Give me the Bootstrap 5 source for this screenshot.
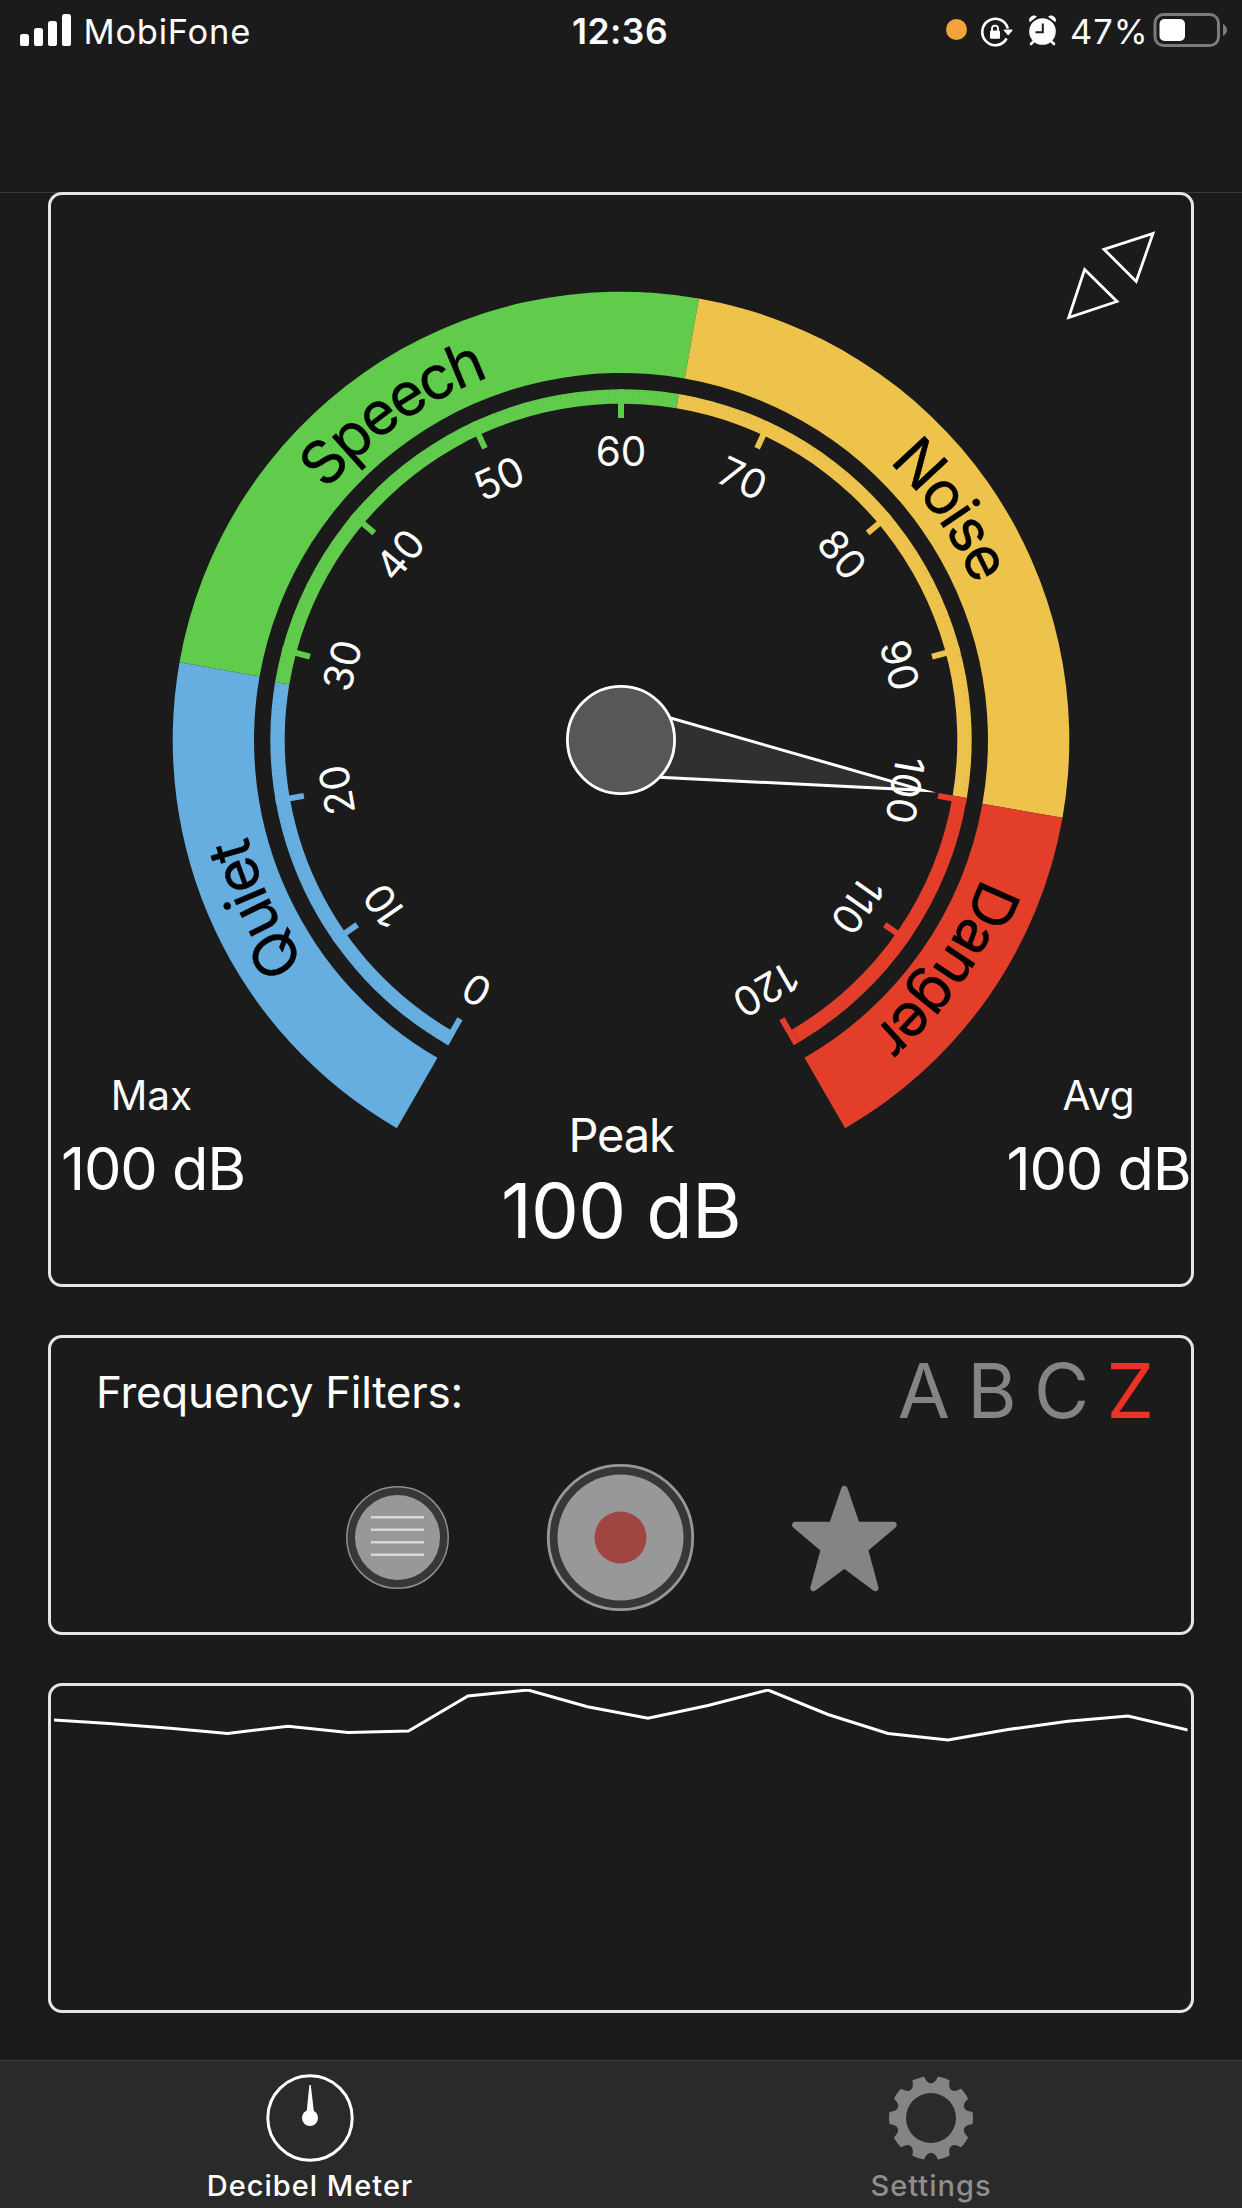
<!DOCTYPE html>
<html lang="en">
<head>
<meta charset="utf-8">
<meta name="viewport" content="width=device-width, initial-scale=1">
<title>Decibel Meter</title>
<link href="https://cdn.jsdelivr.net/npm/bootstrap@5.3.0/dist/css/bootstrap.min.css" rel="stylesheet">
<style>
  :root { --ink:#fff; --page:#1b1b1b; --bar:#2a2a2a; --hair:#3c3c3c; --dim:#848484; }
  body { width:1242px; height:2208px; overflow:hidden; background:var(--page); color:var(--ink);
         font-family:Inter, "Liberation Sans", sans-serif; }
  svg { display:block; flex:none; overflow:visible; }
  .top-area { height:193px; border-bottom:1px solid var(--hair); }
  .status { height:63px; padding:0 14px 0 20px; font-size:34.5px; line-height:63px; }
  .status-side { flex:1 1 0; }
  .carrier { letter-spacing:.75px; margin-left:12.5px; }
  .clock { font-size:35.5px; font-weight:600; letter-spacing:.5px; margin-right:8px; }
  .mic-dot { width:21px; height:21px; background:#f1a33c; margin:0 14px 5px 0; }
  .pct { letter-spacing:.9px; margin:0 4.5px 0 14px; }
  .screen { padding:0 48px; gap:48px; margin-top:-1px; }
  .panel { border:3px solid #e5e5e5; border-radius:14px; background:var(--page); }
  .meter-panel { height:1095px; }
  .filter-panel { height:300px; }
  .chart-panel { height:330px; }
  .expand { top:33px; right:35px; }
  .side-read { width:204px; white-space:nowrap; }
  .lbl { font-size:40.5px; line-height:72px; height:70px; }
  .max-read .lbl { padding-right:3px; }
  .val { font-size:59.5px; line-height:76px; letter-spacing:-1.2px; }
  .lbl-lg { font-size:47px; line-height:70px; letter-spacing:-1.2px; }
  .val-lg { font-size:76px; line-height:81px; letter-spacing:-.7px; }
  .avg-read { padding-left:19px; }
  .peak-read { padding-top:40px; }
  .gauge-num { font-size:40.5px; fill:#fff; text-anchor:middle; }
  .zone-name { font-size:59.5px; fill:#000; stroke:#000; stroke-width:.5px; text-anchor:middle; letter-spacing:-2.4px; }
  .filter-head { height:106px; padding:0 37px 0 45px; }
  .filter-title { font-size:44px; letter-spacing:-.3px; padding-top:2px; }
  .weights { font-size:75.6px; line-height:106px; color:var(--dim); gap:17.3px; }
  .weights .on { color:#ea3323; }
  .actions { height:187px; gap:98px; padding-left:1px; }
  .tabs { height:148px; border-top:1px solid var(--hair); background:var(--bar); font-size:29px; font-weight:500; }
  .tab { width:50%; padding:13px 1px 0 0; letter-spacing:1px; color:#8e8e8e; line-height:47px; }
  .tab.on { color:#fff; }
</style>
</head>
<body class="d-flex flex-column m-0">

<header class="top-area flex-shrink-0">
  <div class="status d-flex align-items-center">
    <div class="status-side d-flex align-items-center">
      <svg width="51" height="63" fill="#fff">
        <rect x="0" y="34" width="9" height="12" rx="2.6"/><rect x="14" y="28" width="9" height="18" rx="2.6"/>
        <rect x="28" y="21" width="9" height="25" rx="2.6"/><rect x="42" y="14" width="9" height="32" rx="2.6"/>
      </svg>
      <span class="carrier">MobiFone</span>
    </div>
    <div class="clock">12:36</div>
    <div class="status-side d-flex align-items-center justify-content-end">
      <span class="mic-dot rounded-circle"></span>
      <svg width="32" height="63" viewBox="0 0 32 63">
        <path d="M25.600 38.500A13 13.200 0 1 1 26.800 28.500" fill="none" stroke="#fff" stroke-width="2.600"/>
        <path d="M23.300 30h7.700L27.200 34.600z" fill="#fff" stroke="#fff" stroke-width="1.200" stroke-linejoin="round"/>
        <rect x="9" y="30.600" width="10" height="8.200" rx="1.200" fill="#fff"/>
        <path d="M11 31v-2.400a3 3 0 0 1 6 0V31" fill="none" stroke="#fff" stroke-width="1.800"/>
      </svg>
      <svg class="ms-3" width="27" height="63" viewBox="0 0 27 63">
        <path d="M4.500 41.500L2 44M22.500 41.500L25 44" stroke="#fff" stroke-width="2.600" stroke-linecap="round"/>
        <circle cx="13.500" cy="31.500" r="13.300" fill="#fff"/>
        <path d="M.8 21.600a4.300 4.300 0 0 1 6.500-4.900zM26.200 21.600a4.300 4.300 0 0 0-6.500-4.900z" fill="#fff" stroke="#fff" stroke-width="1"/>
        <path d="M13.800 23.500v8.700H6.500" fill="none" stroke="#1b1b1b" stroke-width="2"/>
      </svg>
      <span class="pct">47%</span>
      <svg width="75" height="63" viewBox="0 0 75 63">
        <rect x="2" y="14.500" width="63.500" height="31" rx="8.500" fill="none" stroke="#7b7b7b" stroke-width="3"/>
        <rect x="6.500" y="19" width="25.500" height="22" rx="5" fill="#fff"/>
        <path d="M70 24q4 2.500 4 6t-4 6z" fill="#7b7b7b"/>
      </svg>
    </div>
  </div>
</header>

<main class="screen d-flex flex-column flex-grow-1">

  <section class="panel meter-panel position-relative">
    <svg class="expand position-absolute" width="92" height="95" viewBox="1064 228 92 95" fill="none" stroke="#fff" stroke-width="2.800">
      <path d="M1104 249.300L1153 233.500L1136.200 281.500Z"/><path d="M1084.600 269.500L1117 301.500L1068.700 317.500Z"/>
    </svg>
    <svg id="gauge" width="1140" height="865" viewBox="51 195 1140 865">
      <g id="zones"></g>
      <g id="ticks"></g>
      <path d="M614.700 702L923 790.300L609.400 774.800Z" fill="#303030" stroke="#fff" stroke-width="3" stroke-miterlimit="20"/>
      <circle cx="621" cy="740" r="53.600" fill="#575757" stroke="#fff" stroke-width="2.800"/>
      <g id="nums"></g>
    </svg>
    <div class="d-flex justify-content-between text-center">
      <div class="side-read max-read"><div class="lbl">Max</div><div class="val">100 dB</div></div>
      <div class="peak-read"><div class="lbl-lg">Peak</div><div class="val-lg">100 dB</div></div>
      <div class="side-read avg-read"><div class="lbl">Avg</div><div class="val">100 dB</div></div>
    </div>
  </section>

  <section class="panel filter-panel">
    <div class="filter-head d-flex align-items-center justify-content-between">
      <div class="filter-title">Frequency Filters:</div>
      <div class="weights d-flex"><span>A</span><span>B</span><span>C</span><span class="on">Z</span></div>
    </div>
    <div class="actions d-flex align-items-center justify-content-center">
      <svg width="103" height="103" viewBox="-51.500 -51.500 103 103">
        <circle r="50.700" fill="#373737" stroke="#8f8f8f" stroke-width="1.500"/><circle r="42.500" fill="#989898"/>
        <path d="M-26.500-20.200h53M-26.500-7.700h53M-26.500 4.800h53M-26.500 17.300h53" stroke="#d8d8d8" stroke-width="2.600"/>
      </svg>
      <svg width="147" height="147" viewBox="-73.500 -73.500 147 147">
        <circle r="72.200" fill="#373737" stroke="#989898" stroke-width="2.800"/><circle r="63" fill="#989898"/><circle r="26" fill="#a04541"/>
      </svg>
      <svg width="105" height="106" viewBox="792 1484 105 106">
        <path d="M844.400 1488L856.700 1524H893.500L864.800 1548.200L875.300 1587L844.400 1564L813.500 1587L824 1548.200L795.300 1524H832.100Z" fill="#848484" stroke="#848484" stroke-width="6.400" stroke-linejoin="round"/>
      </svg>
    </div>
  </section>

  <section class="panel chart-panel">
    <svg width="1136" height="320" viewBox="51 1686 1136 320">
      <clipPath id="plot"><rect x="54" y="1689" width="1133.500" height="320"/></clipPath>
      <polyline clip-path="url(#plot)" fill="none" stroke="#fff" stroke-width="3"
        points="53,1720 109,1723.500 170,1728.300 227.500,1733.500 288,1726.300 348,1732.500 408.500,1731 468,1696 528,1690 587.500,1706.700 648,1718.300 708,1705.500 768,1690 828,1714.500 888,1733.500 948,1740 1008,1729.500 1068,1721.300 1128,1716 1188,1730"/>
    </svg>
  </section>
</main>

<nav class="tabs d-flex flex-shrink-0">
  <div class="tab on d-flex flex-column align-items-center">
    <svg width="88" height="88" viewBox="-44 -44 88 88">
      <circle r="42.200" fill="none" stroke="#fff" stroke-width="3"/><circle r="8" fill="#fff"/>
      <path d="M-.6-33H.8L4-5H-3.500Z" fill="#fff"/>
    </svg>
    <span>Decibel Meter</span>
  </div>
  <div class="tab d-flex flex-column align-items-center">
    <svg width="88" height="88" viewBox="-44 -44 88 88"><path id="gear" fill="#848484" fill-rule="evenodd"/></svg>
    <span>Settings</span>
  </div>
</nav>

<script src="https://cdn.jsdelivr.net/npm/bootstrap@5.3.0/dist/js/bootstrap.bundle.min.js"></script>
<script>
  // Dial geometry: 2.5 degrees per dB, 60 dB straight up
  const CX = 621, CY = 740;
  const at = (deg, r) => {
    const a = deg * Math.PI / 180;
    return (CX + r * Math.sin(a)).toFixed(2) + ' ' + (CY - r * Math.cos(a)).toFixed(2);
  };
  const angle = db => (db - 60) * 2.5;
  const band = (a, b, R, r, color) => {
    const big = b - a > 180 ? 1 : 0;
    return `<path fill="${color}" d="M${at(a, R)}A${R} ${R} 0 ${big} 1 ${at(b, R)}L${at(b, r)}A${r} ${r} 0 ${big} 0 ${at(a, r)}Z"/>`;
  };
  const zones = [
    ['Quiet', 0, 28, '#66ade0'], ['Speech', 28, 64, '#61cb4c'],
    ['Noise', 64, 100, '#eec34b'], ['Danger', 100, 120, '#e33e2a']
  ];
  let z = '', t = '', n = '';
  zones.forEach(([name, from, to, color], i) => {
    const a = angle(from), b = angle(to), m = (a + b) / 2, r = 386;
    // the thin inner track changes colour half a degree early
    z += band(a, b, 448.3, 367, color) + band(a - .5, b - .5, 350.7, 336.3, color);
    z += `<path id="arc${i}" fill="none" d="M${at(m - 30, r)}A${r} ${r} 0 0 1 ${at(m + 30, r)}"/>`;
    z += `<text class="zone-name"><textPath href="#arc${i}" startOffset="50%">${name}</textPath></text>`;
  });
  for (let d = -149; d < 150; d++)
    t += `<path d="M${at(d, 350.7)}L${at(d, 345)}" stroke="#000" stroke-opacity=".08" stroke-width=".7"/>`;
  for (let db = 0; db <= 120; db += 10) {
    const color = zones.filter(s => db >= s[1]).pop()[3], a = angle(db);
    t += `<path d="M${at(a, 350.700)}L${at(a, 322)}" stroke="${color}" stroke-width="6"/>`;
    n += `<text class="gauge-num" transform="translate(${at(a, 274)}) rotate(${a})">${db}</text>`;
  }
  document.getElementById('zones').innerHTML = z;
  document.getElementById('ticks').innerHTML = t;
  document.getElementById('nums').innerHTML = n;

  // Ten-tooth cog
  let g = '';
  for (let k = 0; k < 10; k++) {
    const c = Math.cos(k * Math.PI / 5), s = Math.sin(k * Math.PI / 5);
    const p = (x, y) => (x * c - y * s).toFixed(2) + ' ' + (x * s + y * c).toFixed(2);
    g += `${k ? 'A42 42 0 0 1 ' : 'M'}${p(-7.1, -41.4)}L${p(-4.8, -37.4)}Q${p(-2.8, -34.7)} ${p(0, -34.7)}Q${p(2.8, -34.7)} ${p(4.8, -37.4)}L${p(7.1, -41.4)}`;
  }
  document.getElementById('gear').setAttribute('d', g + 'ZM25 0A25 25 0 1 0-25 0A25 25 0 1 0 25 0Z');
</script>
</body>
</html>
